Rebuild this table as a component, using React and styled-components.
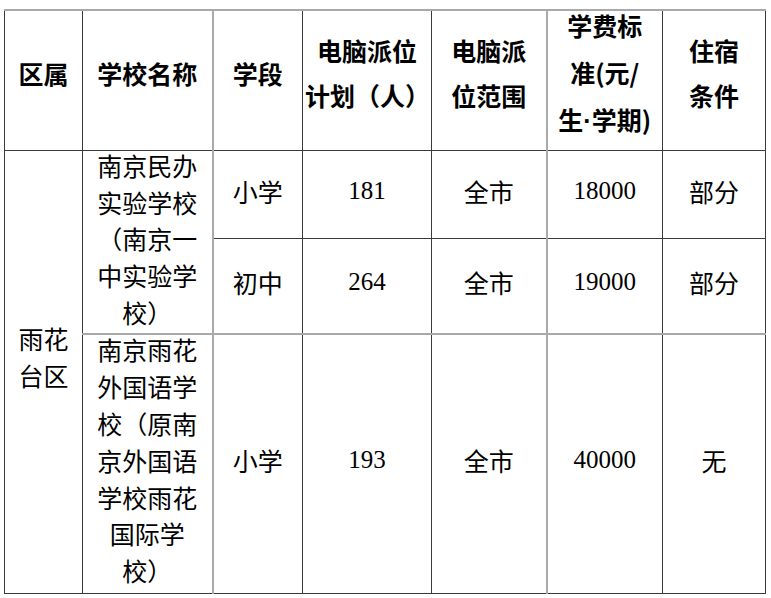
import styled, { createGlobalStyle } from "styled-components";

const GlobalStyle = createGlobalStyle`
  html, body {
    margin: 0;
    padding: 0;
    background: #ffffff;
  }
  body {
    font-family: "Noto Sans CJK SC", "Noto Sans", sans-serif;
    color: #000000;
  }
`;

const Page = styled.div`
  padding: 9px 0 0 4px;
`;

const Table = styled.table`
  border-collapse: collapse;
  table-layout: fixed;
  width: 761px;
`;

const Col = styled.col`
  width: ${(p) => p.$w}px;
`;

const Row = styled.tr`
  height: ${(p) => p.$h}px;
`;

const Cell = styled.td`
  padding: 0 2px ${(p) => (p.$pb === undefined ? 6 : p.$pb)}px;
  text-align: center;
  vertical-align: middle;
  font-size: 25px;
  line-height: 36.8px;
  font-family: ${(p) =>
    p.$serif
      ? `"Liberation Serif", "Times New Roman", serif`
      : `"Noto Sans CJK SC", "Noto Sans", sans-serif`};
  border: 1px solid #3a3a3a;
  ${(p) => p.$grayRight && `border-right: 2px solid #a9a9a9;`}
  ${(p) => p.$grayTop && `border-top: 2px solid #a9a9a9;`}
`;

const HeadCell = styled.th`
  padding: 0 2px ${(p) => (p.$pb === undefined ? 14 : p.$pb)}px;
  text-align: center;
  vertical-align: middle;
  font-size: 25px;
  font-weight: 700;
  line-height: 46px;
  border: 1px solid #3a3a3a;
  border-top: 2px solid #a9a9a9;
  ${(p) => p.$grayRight && `border-right: 2px solid #a9a9a9;`}
`;

const Lines = styled.div`
  margin-top: ${(p) => (p.$lift ? -p.$lift : 0)}px;
  line-height: ${(p) => p.$lh || 46}px;
`;

const Dot = styled.span`
  font-family: "Liberation Sans", Arial, sans-serif;
`;

const br = (lines) =>
  lines.map((l, i) => (
    <span key={i}>
      {l}
      {i < lines.length - 1 && <br />}
    </span>
  ));

export default function App() {
  return (
    <>
      <GlobalStyle />
      <Page>
        <Table>
          <colgroup>
            <Col $w={78} />
            <Col $w={130} />
            <Col $w={90} />
            <Col $w={129} />
            <Col $w={115} />
            <Col $w={116} />
            <Col $w={103} />
          </colgroup>
          <thead>
            <Row $h={140}>
              <HeadCell>区属</HeadCell>
              <HeadCell $grayRight>学校名称</HeadCell>
              <HeadCell>学段</HeadCell>
              <HeadCell>
                <Lines $lh={45}>{br(["电脑派位", "计划（人）"])}</Lines>
              </HeadCell>
              <HeadCell $grayRight>
                <Lines $lh={45}>{br(["电脑派", "位范围"])}</Lines>
              </HeadCell>
              <HeadCell $pb={0}>
                <Lines $lift={14} $lh={47}>
                  学费标
                  <br />
                  准(元/
                  <br />
                  生<Dot>·</Dot>学期)
                </Lines>
              </HeadCell>
              <HeadCell>
                <Lines $lh={45}>{br(["住宿", "条件"])}</Lines>
              </HeadCell>
            </Row>
          </thead>
          <tbody>
            <Row $h={88}>
              <Cell rowSpan={3} $pb={30}>
                {br(["雨花", "台区"])}
              </Cell>
              <Cell rowSpan={2} $grayRight $pb={0}>
                <Lines $lift={6} $lh={36.8}>
                  {br(["南京民办", "实验学校", "（南京一", "中实验学", "校）"])}
                </Lines>
              </Cell>
              <Cell>小学</Cell>
              <Cell $serif>181</Cell>
              <Cell $grayRight>全市</Cell>
              <Cell $serif>18000</Cell>
              <Cell>部分</Cell>
            </Row>
            <Row $h={96}>
              <Cell>初中</Cell>
              <Cell $serif>264</Cell>
              <Cell $grayRight>全市</Cell>
              <Cell $serif>19000</Cell>
              <Cell>部分</Cell>
            </Row>
            <Row $h={259}>
              <Cell $grayRight $grayTop $pb={0}>
                <Lines $lift={7} $lh={36.8}>
                  {br([
                    "南京雨花",
                    "外国语学",
                    "校（原南",
                    "京外国语",
                    "学校雨花",
                    "国际学",
                    "校）",
                  ])}
                </Lines>
              </Cell>
              <Cell $grayTop>小学</Cell>
              <Cell $grayTop $serif>
                193
              </Cell>
              <Cell $grayTop $grayRight>
                全市
              </Cell>
              <Cell $grayTop $serif>
                40000
              </Cell>
              <Cell $grayTop>无</Cell>
            </Row>
          </tbody>
        </Table>
      </Page>
    </>
  );
}
